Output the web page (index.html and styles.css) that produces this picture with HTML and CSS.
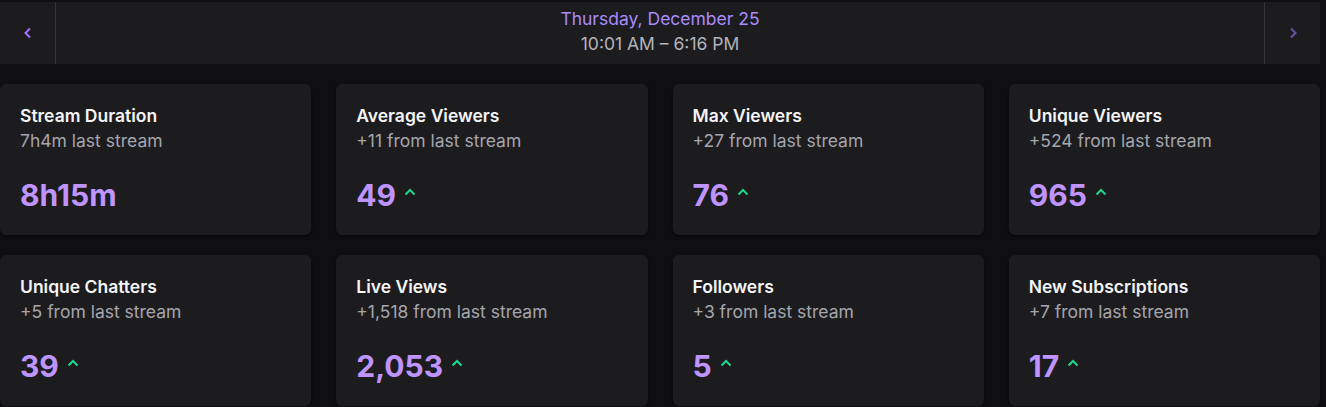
FILE: index.html
```html
<!DOCTYPE html>
<html lang="en">
<head>
    <meta charset="UTF-8">
    <meta name="viewport" content="width=device-width, initial-scale=1.0">
    <title>Stream Summary</title>
    <link rel="stylesheet" href="styles.css">
</head>
<body>
    <div class="page">
        <!-- Date navigation -->
        <div class="date-bar">
            <button class="nav-button prev">
                <svg width="10" height="12" viewBox="0 0 10 12"><path d="M7 1.5 L2.5 6 L7 10.5" fill="none" stroke="currentColor" stroke-width="2"/></svg>
            </button>
            <div class="date-info">
                <div class="date">Thursday, December 25</div>
                <div class="time">10:01 AM – 6:16 PM</div>
            </div>
            <button class="nav-button next">
                <svg width="10" height="12" viewBox="0 0 10 12"><path d="M3 1.5 L7.5 6 L3 10.5" fill="none" stroke="currentColor" stroke-width="2"/></svg>
            </button>
        </div>

        <!-- Stat cards -->
        <div class="stats">
            <div class="card">
                <div class="card-title">Stream Duration</div>
                <div class="card-sub">7h4m last stream</div>
                <div class="card-value">8h15m</div>
            </div>
            <div class="card">
                <div class="card-title">Average Viewers</div>
                <div class="card-sub">+11 from last stream</div>
                <div class="card-value">49 <span class="up"><svg width="12" height="8" viewBox="0 0 12 8"><path d="M1.5 6.5 L6 2 L10.5 6.5" fill="none" stroke="currentColor" stroke-width="2"/></svg></span></div>
            </div>
            <div class="card">
                <div class="card-title">Max Viewers</div>
                <div class="card-sub">+27 from last stream</div>
                <div class="card-value">76 <span class="up"><svg width="12" height="8" viewBox="0 0 12 8"><path d="M1.5 6.5 L6 2 L10.5 6.5" fill="none" stroke="currentColor" stroke-width="2"/></svg></span></div>
            </div>
            <div class="card">
                <div class="card-title">Unique Viewers</div>
                <div class="card-sub">+524 from last stream</div>
                <div class="card-value">965 <span class="up"><svg width="12" height="8" viewBox="0 0 12 8"><path d="M1.5 6.5 L6 2 L10.5 6.5" fill="none" stroke="currentColor" stroke-width="2"/></svg></span></div>
            </div>
            <div class="card">
                <div class="card-title">Unique Chatters</div>
                <div class="card-sub">+5 from last stream</div>
                <div class="card-value">39 <span class="up"><svg width="12" height="8" viewBox="0 0 12 8"><path d="M1.5 6.5 L6 2 L10.5 6.5" fill="none" stroke="currentColor" stroke-width="2"/></svg></span></div>
            </div>
            <div class="card">
                <div class="card-title">Live Views</div>
                <div class="card-sub">+1,518 from last stream</div>
                <div class="card-value">2,053 <span class="up"><svg width="12" height="8" viewBox="0 0 12 8"><path d="M1.5 6.5 L6 2 L10.5 6.5" fill="none" stroke="currentColor" stroke-width="2"/></svg></span></div>
            </div>
            <div class="card">
                <div class="card-title">Followers</div>
                <div class="card-sub">+3 from last stream</div>
                <div class="card-value">5 <span class="up"><svg width="12" height="8" viewBox="0 0 12 8"><path d="M1.5 6.5 L6 2 L10.5 6.5" fill="none" stroke="currentColor" stroke-width="2"/></svg></span></div>
            </div>
            <div class="card">
                <div class="card-title">New Subscriptions</div>
                <div class="card-sub">+7 from last stream</div>
                <div class="card-value">17 <span class="up"><svg width="12" height="8" viewBox="0 0 12 8"><path d="M1.5 6.5 L6 2 L10.5 6.5" fill="none" stroke="currentColor" stroke-width="2"/></svg></span></div>
            </div>
        </div>
    </div>
</body>
</html>
```

FILE: styles.css
```css
body {
    margin: 0;
    padding: 2px 0 0 0;
    font-family: Inter, "Noto Sans", sans-serif;
    background-color: #0f0f11;
    color: #efeff1;
}
.page {
    width: 1320px;
}
.date-bar {
    display: flex;
    align-items: stretch;
    height: 62px;
    background-color: #1c1c1f;
    box-sizing: border-box;
}
.nav-button {
    width: 56px;
    border: none;
    background: none;
    padding: 0;
    display: flex;
    align-items: center;
    justify-content: center;
    cursor: pointer;
}
.nav-button.prev {
    border-right: 1px solid #36363b;
    color: #a970ff;
}
.nav-button.next {
    border-left: 1px solid #36363b;
    color: #6a52a8;
}
.date-info {
    flex: 1;
    display: flex;
    flex-direction: column;
    justify-content: center;
    align-items: center;
    font-size: 17.5px;
    line-height: 25px;
    padding-bottom: 5px;
}
.date {
    color: #a98bfb;
}
.time {
    color: #b3b3bb;
}
.stats {
    display: grid;
    grid-template-columns: repeat(4, 1fr);
    column-gap: 25px;
    row-gap: 20px;
    margin-top: 20px;
}
.card {
    background-color: #1c1c1f;
    border-radius: 6px;
    padding: 20px 20px 22px 20px;
    box-shadow: 0 2px 3px rgba(0, 0, 0, 0.5);
    height: 151px;
    box-sizing: border-box;
}
.card-title {
    font-size: 17.5px;
    font-weight: 600;
    line-height: 24px;
    color: #f4f4f6;
}
.card-sub {
    font-size: 17.5px;
    line-height: 26px;
    color: #a5a5ad;
}
.card-value {
    margin-top: 23px;
    font-size: 30px;
    font-weight: 700;
    line-height: 36px;
    color: #bf94ff;
    display: flex;
    align-items: center;
    gap: 8px;
}
.up {
    color: #1fd68a;
    display: flex;
    margin-top: -6px;
}
```
